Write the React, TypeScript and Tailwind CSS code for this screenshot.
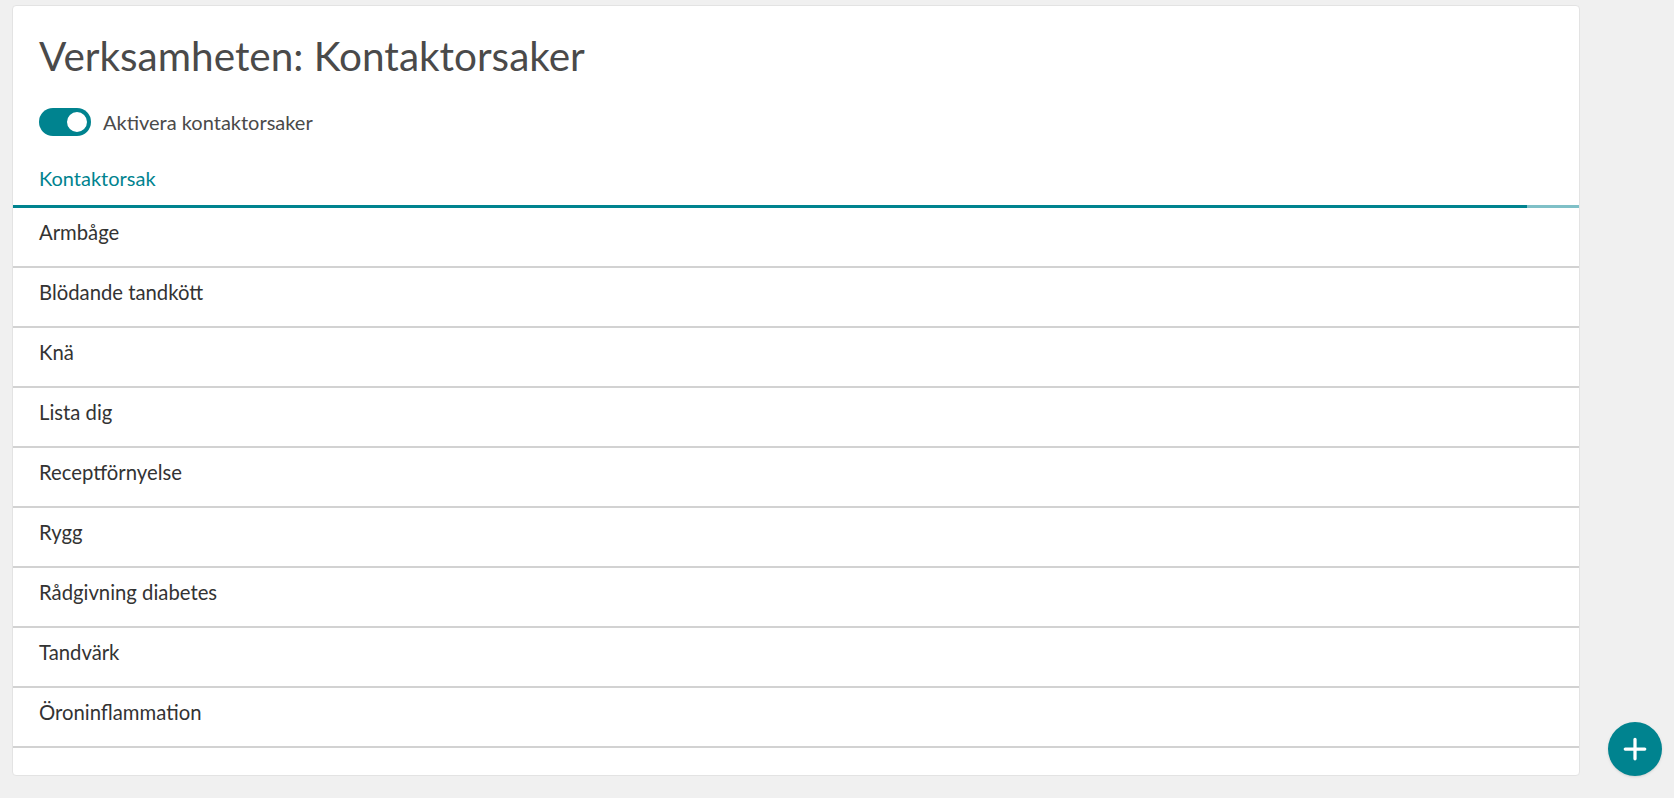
import { useState } from 'react';

const reasons = [
  'Armbåge',
  'Blödande tandkött',
  'Knä',
  'Lista dig',
  'Receptförnyelse',
  'Rygg',
  'Rådgivning diabetes',
  'Tandvärk',
  'Öroninflammation',
];

export default function App() {
  const [active, setActive] = useState(true);

  return (
    <div
      className="relative min-h-[798px] w-full bg-[#f0f0f0] pl-[12px] pt-[5px]"
      style={{ fontFamily: 'Lato, "Open Sans", sans-serif' }}
    >
      <div className="flex h-[771px] w-[1568px] flex-col rounded-[4px] border border-[#e3e3e3] bg-white">
        <div className="px-[26px] pt-[26px]">
          <h1 className="text-[40.5px] leading-[48px] font-normal text-[#4a4a4a]">Verksamheten: Kontaktorsaker</h1>
          <label className="mt-[28px] flex items-center gap-[12px]">
            <button
              onClick={() => setActive(!active)}
              className={`flex h-[28px] w-[52px] items-center rounded-full p-[2px] ${active ? 'justify-end bg-[#00838f]' : 'justify-start bg-[#bdbdbd]'}`}
            >
              <span className="h-[24px] w-[24px] rounded-full border-2 border-[#00838f] bg-white" />
            </button>
            <span className="text-[20px] leading-[28px] text-[#4a4a4a]">Aktivera kontaktorsaker</span>
          </label>
        </div>

        <div className="mt-[30px] flex">
          <div className="flex-1 border-b-[3px] border-[#00838f] pb-[15px] pl-[26px] text-[20px] leading-[24px] text-[#00838f]">Kontaktorsak</div>
          <div className="w-[52px] border-b-[3px] border-[#7fc0c7]" />
        </div>

        <ul>
          {reasons.map((r) => (
            <li key={r} className="flex h-[60px] items-center border-b-2 border-[#d2d2d2] pb-[9px] pl-[26px] text-[20.3px] text-[#333333]">
              {r}
            </li>
          ))}
        </ul>
      </div>

      <button className="absolute right-[12px] top-[722px] flex h-[54px] w-[54px] items-center justify-center rounded-full bg-[#00838f] text-white shadow-sm">
        <svg viewBox="0 0 24 24" className="h-[26px] w-[26px]" fill="none" stroke="currentColor" strokeWidth={3} strokeLinecap="round">
          <path d="M12 3v18M3 12h18" />
        </svg>
      </button>
    </div>
  );
}
